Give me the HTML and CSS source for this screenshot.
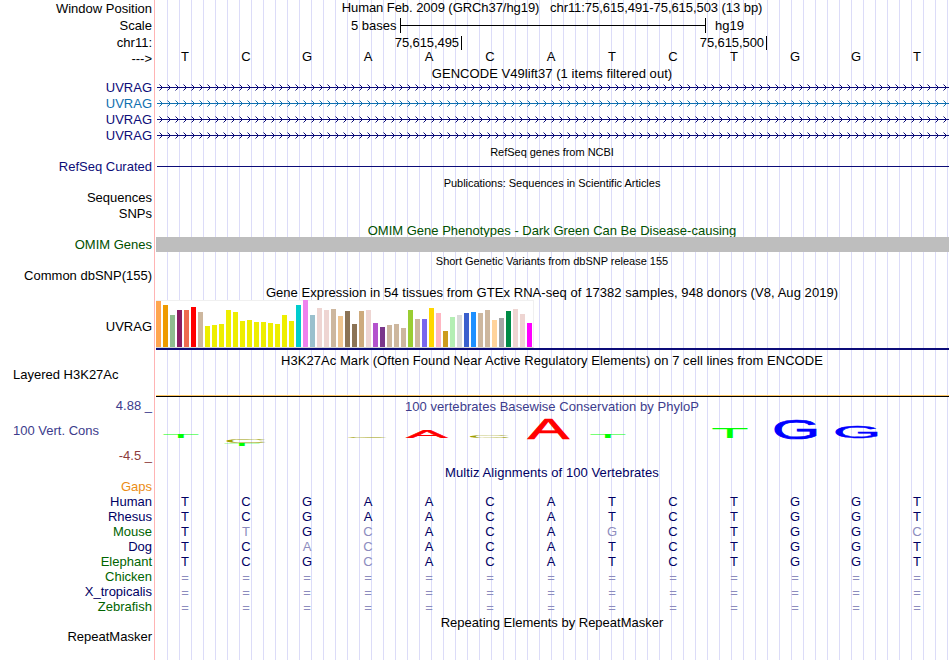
FILE: index.html
```
<!DOCTYPE html>
<html lang="en">
<head>
    <meta charset="UTF-8">
    <title>UVRAG chr11:75,615,491-75,615,503</title>
    <link rel="stylesheet" href="styles.css">
</head>
<body>

    <div class="browser">
        <div class="row h17"><div class="label">Window Position</div><div class="title up w-pos">Human Feb. 2009 (GRCh37/hg19) &nbsp; chr11:75,615,491-75,615,503 (13 bp)</div></div>
        <div class="row h17">
            <div class="label">Scale</div>
            <div class="scale"><span class="bases">5 bases</span><span class="ruler"></span><span>hg19</span></div>
        </div>
        <div class="row h17">
            <div class="label">chr11:</div>
            <div class="ticks"><span>75,615,495</span><span>75,615,500</span></div>
        </div>
        <div class="row h14"><div class="label">---&gt;</div><div class="seq ruler-seq" data-seq="TCGAACATCTGGT"></div></div>

        <div class="row h15"><div class="title down w-gencode">GENCODE V49lift37 (1 items filtered out)</div></div>
        <div class="row h16"><div class="label up navy">UVRAG</div><div class="gene navy"></div></div>
        <div class="row h16"><div class="label up blue">UVRAG</div><div class="gene blue"></div></div>
        <div class="row h16"><div class="label up navy">UVRAG</div><div class="gene navy"></div></div>
        <div class="row h16"><div class="label up navy">UVRAG</div><div class="gene navy"></div></div>

        <div class="row h16"><div class="title small">RefSeq genes from NCBI</div></div>
        <div class="row h14"><div class="label up navy">RefSeq Curated</div><div class="intron"></div></div>

        <div class="row h17"><div class="title small down">Publications: Sequences in Scientific Articles</div></div>
        <div class="row h15"><div class="label up">Sequences</div></div>
        <div class="row h16"><div class="label up">SNPs</div></div>

        <div class="row h15"><div class="title down omim w-omim">OMIM Gene Phenotypes - Dark Green Can Be Disease-causing</div></div>
        <div class="row h15"><div class="label omim">OMIM Genes</div><div class="omim-bar"></div></div>

        <div class="row h16"><div class="title small down">Short Genetic Variants from dbSNP release 155</div></div>
        <div class="row h15"><div class="label">Common dbSNP(155)</div></div>

        <div class="row h17"><div class="title down w-gtex">Gene Expression in 54 tissues from GTEx RNA-seq of 17382 samples, 948 donors (V8, Aug 2019)</div></div>
        <div class="row gtex-row"><div class="label down">UVRAG</div><div class="gtex"><div class="bars" id="bars"></div></div></div>

        <div class="row h18"><div class="title down w-h3k">H3K27Ac Mark (Often Found Near Active Regulatory Elements) on 7 cell lines from ENCODE</div></div>
        <div class="row h3k-row"><div class="label left up">Layered H3K27Ac</div><div class="h3k"></div></div>

        <div class="row h18"><div class="label up cons">4.88 _</div><div class="title cons w-phylop">100 vertebrates Basewise Conservation by PhyloP</div></div>
        <div class="row cons-row">
            <div class="cons-labels">
                <div class="label left cons">100 Vert. Cons</div>
                <div class="label low">-4.5 _</div>
            </div>
            <svg class="logo" width="793" height="49" id="logo"></svg>
        </div>

        <div class="row h16"><div class="title align w-multiz">Multiz Alignments of 100 Vertebrates</div></div>
        <div class="row h15"><div class="label up gaps">Gaps</div></div>
        <div class="row h15"><div class="label up align">Human</div><div class="seq" data-seq="TCGAACATCTGGT"></div></div>
        <div class="row h15"><div class="label up align">Rhesus</div><div class="seq" data-seq="TCGAACATCTGGT"></div></div>
        <div class="row h15"><div class="label up green">Mouse</div><div class="seq" data-seq="TtGcACAgCTGGc"></div></div>
        <div class="row h15"><div class="label up align">Dog</div><div class="seq" data-seq="TCacACATCTGGT"></div></div>
        <div class="row h15"><div class="label up green">Elephant</div><div class="seq" data-seq="TCGcACATCTGGT"></div></div>
        <div class="row h15"><div class="label up green">Chicken</div><div class="seq" data-seq="============="></div></div>
        <div class="row h15"><div class="label up align">X_tropicalis</div><div class="seq" data-seq="============="></div></div>
        <div class="row h15"><div class="label up green">Zebrafish</div><div class="seq" data-seq="============="></div></div>

        <div class="row h15"><div class="title w-rmsk">Repeating Elements by RepeatMasker</div></div>
        <div class="row h14"><div class="label up">RepeatMasker</div></div>
    </div>

    <script>
        // Bases: lower case means a mismatch with the reference base
        document.querySelectorAll('.seq').forEach(seq => {
            for (const base of seq.dataset.seq) {
                const span = document.createElement('span');
                span.textContent = base.toUpperCase();
                if (base === '=') {
                    span.className = 'gap';
                } else if (base !== base.toUpperCase()) {
                    span.className = 'mismatch';
                }
                seq.appendChild(span);
            }
        });

        // Gene models: intron line with strand arrows every 8px
        document.querySelectorAll('.gene').forEach(gene => {
            let arrows = '';
            let tails = '';
            for (let x = 6; x < 793; x += 8) {
                for (let i = 1; i <= 2; i++) {
                    arrows += `M${x - i} ${7 - i}h1v1h-1zM${x - i} ${7 + i}h1v1h-1z`;
                }
                tails += `M${x - 3} 4h1v1h-1zM${x - 3} 10h1v1h-1z`;
            }
            gene.innerHTML = `<svg width="793" height="16">
                <path d="${arrows}"/>
                <path class="tail" d="${tails}"/>
                <rect x="1" y="7" width="792" height="1"/>
            </svg>`;
        });

        // GTEx: [bar height, tissue color]
        const tissues = [
            [46, '#ffa54f'], [42, '#ee9a00'], [32, '#8fbc8f'], [37, '#8b1c62'], [37, '#ee6a50'], [40, '#ff0000'],
            [35, '#cdb79e'], [21, '#eeee00'], [22, '#eeee00'], [23, '#eeee00'], [37, '#eeee00'], [35, '#eeee00'],
            [26, '#eeee00'], [27, '#eeee00'], [25, '#eeee00'], [25, '#eeee00'], [24, '#eeee00'], [23, '#eeee00'],
            [32, '#eeee00'], [26, '#eeee00'], [42, '#00cdcd'], [47, '#ee82ee'], [32, '#9ac0cd'], [39, '#eed5d2'],
            [37, '#eed5d2'], [38, '#cdb79e'], [31, '#eec591'], [36, '#8b7355'], [23, '#8b7355'], [36, '#cdaa7d'],
            [37, '#eed5d2'], [24, '#b452cd'], [20, '#7a378b'], [22, '#cdb79e'], [23, '#cdb79e'], [19, '#cdb79e'],
            [37, '#9acd32'], [28, '#cdb79e'], [28, '#7a67ee'], [39, '#ffd700'], [34, '#ffb6c1'], [16, '#cd9b1d'],
            [30, '#b4eeb4'], [32, '#d9d9d9'], [34, '#3a5fcd'], [35, '#1e90ff'], [34, '#cdb79e'], [37, '#cdb79e'],
            [27, '#ffd39b'], [29, '#a6a6a6'], [36, '#008b45'], [38, '#eed5d2'], [33, '#eed5d2'], [24, '#ff00ff']
        ];
        document.getElementById('bars').innerHTML = tissues.map(([height, color]) =>
            `<i style="height:${height}px;background:${color}"></i>`).join('');

        // Conservation logo: [base, center x, bottom y, height]
        const logo = [
            ['T', 25, 23, 4], ['C', 89.5, 28, 4], ['T', 86, 31, 3], ['C', 211, 23, 1],
            ['A', 271, 23, 7.5], ['C', 333, 23, 3], ['A', 392.5, 24, 20.5], ['T', 452, 23, 4],
            ['T', 574, 23, 10], ['G', 640, 23.5, 19.5], ['G', 701, 22.7, 11]
        ];
        document.getElementById('logo').innerHTML = logo.map(([base, x, y, height]) =>
            `<text class="base-${base}" transform="translate(${x} ${y}) scale(1 ${height / 42.7})">${base}</text>`).join('');
    </script>

</body>
</html>
```
FILE: styles.css
```
body {
    margin: 0;
    background-color: #fff;
    font-family: "Liberation Sans", Arial, sans-serif;
    font-size: 13px;
    color: #000;
}

.browser {
    width: 950px;
    height: 660px;
    overflow: hidden;
    background:
        linear-gradient(#ffb4b4, #ffb4b4) 154px 0 / 1px 100% no-repeat,
        repeating-linear-gradient(to right, #dcdcf8 0, #dcdcf8 1px, transparent 1px, transparent 12px) 167px 0 / 783px 100% no-repeat;
}

.row {
    display: grid;
    grid-template-columns: 152px 793px;
    grid-template-rows: 100%;
    column-gap: 4px;
    align-items: center;
    white-space: nowrap;
}

.h14 { height: 14px; }
.h15 { height: 15px; }
.h16 { height: 16px; }
.h17 { height: 17px; }
.h18 { height: 18px; }

.label {
    grid-column: 1;
    text-align: right;
    line-height: 15px;
}

.label.left {
    text-align: left;
    padding-left: 13px;
}

.title {
    grid-column: 2;
    text-align: center;
    line-height: 15px;
    padding-right: 1px;
}

.title.small {
    font-size: 11px;
    letter-spacing: -0.02px;
}

/* baseline nudges */
.up { padding-bottom: 2px; }
.down { padding-top: 2px; }

.w-pos { letter-spacing: -0.06px; }
.w-gencode { letter-spacing: 0.05px; }
.w-gtex { letter-spacing: 0.055px; }
.w-h3k { letter-spacing: 0.05px; }
.w-phylop { letter-spacing: 0.04px; }
.w-multiz { letter-spacing: 0.08px; }

.navy { color: #0c0c78; }
.blue { color: #1070b0; }
.omim { color: #005000; }
.cons { color: #3c3c8c; }
.low { color: #8c3c3c; }
.align { color: #000064; }
.green { color: #006400; }
.gaps { color: #eb8c14; }

/* position ruler */
.scale {
    display: flex;
    align-items: center;
    padding-left: 195px;
}

.bases {
    width: 45px;
}

.ruler {
    width: 304px;
    height: 15px;
    margin: 0 9px 0 4px;
    border: solid #000;
    border-width: 0 1px;
    background: linear-gradient(#000, #000) 0 7px / 100% 1px no-repeat;
}

.ticks {
    display: grid;
    grid-template-columns: 306px 305px;
    line-height: 14px;
    text-align: right;
}

.ticks span {
    border-right: 1px solid #000;
    padding-right: 2px;
    letter-spacing: -0.08px;
}

.seq {
    display: grid;
    grid-template-columns: repeat(13, 61px);
    margin-left: -1.5px;
    margin-top: -2px;
    line-height: 15px;
    text-align: center;
    color: #000064;
}

.ruler-seq {
    color: #000;
    margin-top: -3px;
}

.mismatch,
.gap {
    color: #8c8cbe;
}

.gap {
    padding-top: 2px;
}

/* gene tracks */
.gene,
.gene svg {
    display: block;
    height: 16px;
}

.gene svg {
    fill: currentColor;
}

.gene .tail {
    opacity: 0.5;
}

.intron {
    height: 1px;
    margin: -1px 0 0 1px;
    background-color: #0c0c78;
}

.omim-bar {
    height: 15px;
    background-color: #bebebe;
}

/* expression bars */
.gtex-row {
    height: 50px;
}

.gtex {
    height: 48px;
    border-bottom: 2px solid #0c0c78;
}

.bars {
    display: flex;
    align-items: flex-end;
    gap: 2px;
    width: 377px;
    height: 46px;
    border: solid #f0f0f0;
    border-width: 1px 1px 1px 0;
    border-bottom-color: #d2d2d2;
    background-color: #fff;
}

.bars i {
    width: 5px;
}

.h3k-row {
    height: 29px;
    align-items: stretch;
}

.h3k-row .label {
    margin-top: -1px;
}

.h3k {
    border-bottom: 1px solid #000;
    box-shadow: inset 0 -1px #ffc864;
}

/* conservation */
.cons-row {
    height: 49px;
    align-items: stretch;
}

.cons-labels {
    display: flex;
    flex-direction: column;
    justify-content: space-between;
    padding: 8px 0 1px;
}

.base-A { fill: #f00; stroke: #f00; }
.base-C { fill: #a0a000; }
.base-G { fill: #00f; stroke: #00f; }
.base-T { fill: #0f0; }

.logo {
    overflow: visible;
}

.logo text {
    font-size: 62px;
    text-anchor: middle;
    stroke-width: 1.4;
}
```
